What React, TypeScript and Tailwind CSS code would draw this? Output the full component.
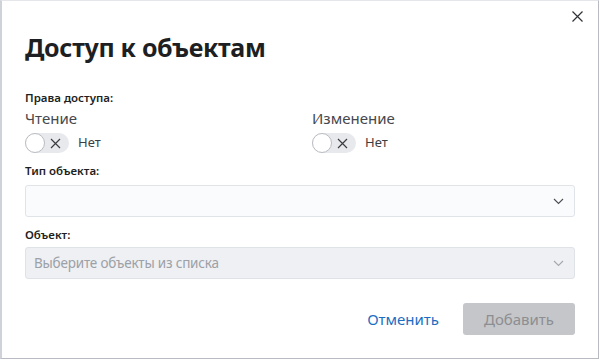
import React from "react";

function Toggle() {
  return (
    <div className="flex items-center gap-[9px]">
      <div className="relative w-[44px] h-[20px] rounded-full bg-[#e8e9ec] flex items-center">
        <div className="w-[20px] h-[20px] rounded-full bg-white border border-[#b9bcc2]" />
        <svg className="ml-[5px]" width="11" height="11" viewBox="0 0 11 11">
          <path d="M1 1L10 10M10 1L1 10" stroke="#3a3d42" strokeWidth="1.2" />
        </svg>
      </div>
      <span className="text-[13px] text-[#3b3e43]">Нет</span>
    </div>
  );
}

function Chevron({ color }: { color: string }) {
  return (
    <svg width="11" height="7" viewBox="0 0 11 7">
      <path d="M1 1L5.5 5.5L10 1" stroke={color} strokeWidth="1.1" fill="none" />
    </svg>
  );
}

export default function App() {
  return (
    <div
      className="w-[600px] h-[360px] bg-white"
      style={{ fontFamily: '"Noto Sans", "Open Sans", sans-serif' }}
    >
      <div className="w-[599px] h-[359px] border-l-2 border-l-[#cfd3d9] border-t border-t-[#e4e6ea] border-r border-r-[#b8bcc2] border-b border-b-[#b8bcc2] flex flex-col">
        <div className="flex justify-end pt-[10px] pr-[15px] h-[30px]">
          <svg width="11" height="11" viewBox="0 0 11 11">
            <path d="M0.5 0.5L10.5 10.5M10.5 0.5L0.5 10.5" stroke="#2f3236" strokeWidth="1.2" />
          </svg>
        </div>
        <div className="pl-[23px] pr-[23px] flex flex-col">
          <h1 className="text-[25px] font-bold text-[#1d1f22] leading-[32px] tracking-[-0.3px]">
            Доступ к объектам
          </h1>
          <div className="text-[11.5px] font-semibold text-[#1d1f22] leading-[16px] mt-[27px]">
            Права доступа:
          </div>
          <div className="grid grid-cols-2 mt-[2px]">
            <div className="flex flex-col gap-[5px]">
              <div className="text-[15px] text-[#45484d] leading-[20px]">Чтение</div>
              <Toggle />
            </div>
            <div className="flex flex-col gap-[5px] pl-[12px]">
              <div className="text-[15px] text-[#45484d] leading-[20px]">Изменение</div>
              <Toggle />
            </div>
          </div>
          <div className="text-[11.5px] font-semibold text-[#1d1f22] leading-[16px] mt-[10px]">
            Тип объекта:
          </div>
          <div className="mt-[6px] h-[32px] rounded-[3px] border border-[#e0e3e8] bg-[#fafbfc] flex items-center justify-end pr-[10px]">
            <Chevron color="#4a4d52" />
          </div>
          <div className="text-[11.5px] font-semibold text-[#1d1f22] leading-[16px] mt-[10px]">
            Объект:
          </div>
          <div className="mt-[4px] h-[32px] rounded-[3px] border border-[#dfe2e7] bg-[#eef0f4] flex items-center justify-between pl-[8px] pr-[10px]">
            <span className="text-[13.5px] text-[#9ca0a7] tracking-[-0.2px]">Выберите объекты из списка</span>
            <Chevron color="#a4a8ae" />
          </div>
          <div className="flex justify-end items-center mt-[24px] gap-[24px]">
            <span className="text-[15px] text-[#1b6ec2]">Отменить</span>
            <div className="w-[112px] h-[32px] rounded-[3px] bg-[#c5c6c9] flex items-center justify-center text-[15px] text-[#8c8e92]">
              Добавить
            </div>
          </div>
        </div>
      </div>
    </div>
  );
}
